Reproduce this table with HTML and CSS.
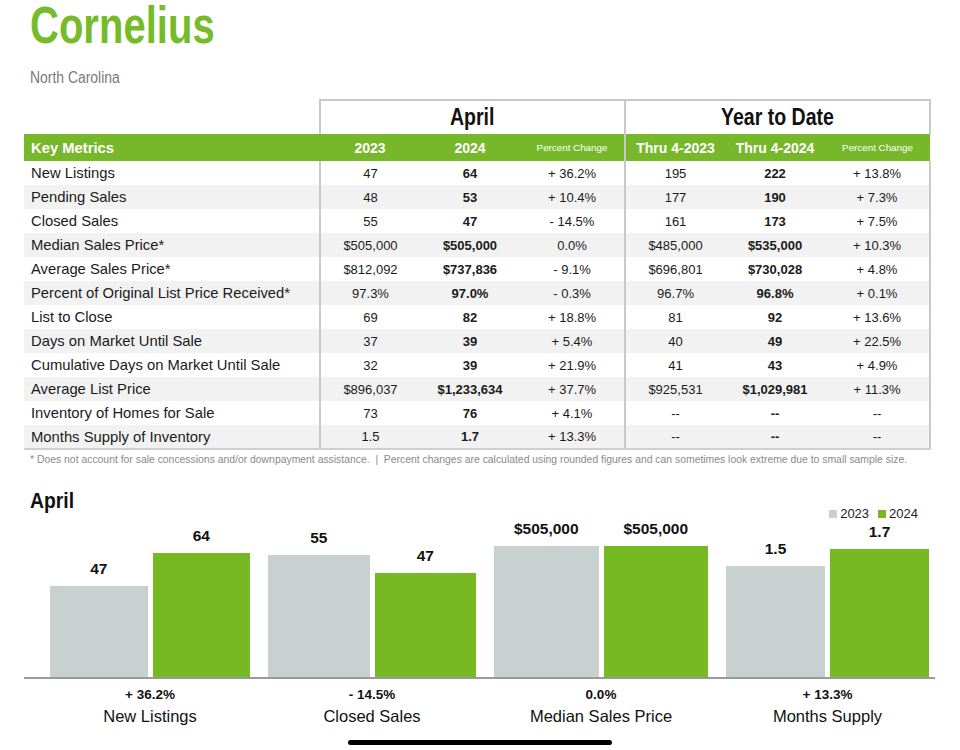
FILE: index.html
```html
<!DOCTYPE html>
<html>
<head>
<meta charset="utf-8">
<link rel="stylesheet" href="styles.css">
</head>
<body>
<div class="page">
  <h1 class="title"><span class="narrow n-title">Cornelius</span></h1>
  <div class="subtitle"><span class="narrow n-sub">North Carolina</span></div>

  <table class="metrics">
    <colgroup>
      <col class="c-label"><col class="c-num"><col class="c-num"><col class="c-pct"><col class="c-num"><col class="c-num"><col class="c-pct">
    </colgroup>
    <thead>
      <tr class="period">
        <th class="blank"></th>
        <th colspan="3" class="sect"><span class="narrow n-head">April</span></th>
        <th colspan="3" class="sect"><span class="narrow n-head">Year to Date</span></th>
      </tr>
      <tr class="green">
        <th class="lbl">Key Metrics</th>
        <th>2023</th><th>2024</th><th class="pc sep-r">Percent Change</th>
        <th>Thru 4-2023</th><th>Thru 4-2024</th><th class="pc">Percent Change</th>
      </tr>
    </thead>
    <tbody>
      <tr><td class="lbl">New Listings</td><td>47</td><td class="b">64</td><td class="sep-r">+ 36.2%</td><td>195</td><td class="b">222</td><td>+ 13.8%</td></tr>
      <tr class="alt"><td class="lbl">Pending Sales</td><td>48</td><td class="b">53</td><td class="sep-r">+ 10.4%</td><td>177</td><td class="b">190</td><td>+ 7.3%</td></tr>
      <tr><td class="lbl">Closed Sales</td><td>55</td><td class="b">47</td><td class="sep-r">- 14.5%</td><td>161</td><td class="b">173</td><td>+ 7.5%</td></tr>
      <tr class="alt"><td class="lbl">Median Sales Price*</td><td>$505,000</td><td class="b">$505,000</td><td class="sep-r">0.0%</td><td>$485,000</td><td class="b">$535,000</td><td>+ 10.3%</td></tr>
      <tr><td class="lbl">Average Sales Price*</td><td>$812,092</td><td class="b">$737,836</td><td class="sep-r">- 9.1%</td><td>$696,801</td><td class="b">$730,028</td><td>+ 4.8%</td></tr>
      <tr class="alt"><td class="lbl">Percent of Original List Price Received*</td><td>97.3%</td><td class="b">97.0%</td><td class="sep-r">- 0.3%</td><td>96.7%</td><td class="b">96.8%</td><td>+ 0.1%</td></tr>
      <tr><td class="lbl">List to Close</td><td>69</td><td class="b">82</td><td class="sep-r">+ 18.8%</td><td>81</td><td class="b">92</td><td>+ 13.6%</td></tr>
      <tr class="alt"><td class="lbl">Days on Market Until Sale</td><td>37</td><td class="b">39</td><td class="sep-r">+ 5.4%</td><td>40</td><td class="b">49</td><td>+ 22.5%</td></tr>
      <tr><td class="lbl">Cumulative Days on Market Until Sale</td><td>32</td><td class="b">39</td><td class="sep-r">+ 21.9%</td><td>41</td><td class="b">43</td><td>+ 4.9%</td></tr>
      <tr class="alt"><td class="lbl">Average List Price</td><td>$896,037</td><td class="b">$1,233,634</td><td class="sep-r">+ 37.7%</td><td>$925,531</td><td class="b">$1,029,981</td><td>+ 11.3%</td></tr>
      <tr><td class="lbl">Inventory of Homes for Sale</td><td>73</td><td class="b">76</td><td class="sep-r">+ 4.1%</td><td>--</td><td class="b">--</td><td>--</td></tr>
      <tr class="alt"><td class="lbl">Months Supply of Inventory</td><td>1.5</td><td class="b">1.7</td><td class="sep-r">+ 13.3%</td><td>--</td><td class="b">--</td><td>--</td></tr>
    </tbody>
  </table>
  <p class="note">* Does not account for sale concessions and/or downpayment assistance. &nbsp;|&nbsp; Percent changes are calculated using rounded figures and can sometimes look extreme due to small sample size.</p>

  <section class="chart">
    <div class="chart-head">
      <h2 class="chart-title"><span class="narrow n-chart">April</span></h2>
      <div class="legend">
        <span class="key"><i class="sw gray"></i>2023</span>
        <span class="key"><i class="sw green"></i>2024</span>
      </div>
    </div>
    <div class="plot">
      <div class="group">
        <div class="bar-col"><span class="val">47</span><div class="bar gray" style="height:91px"></div></div>
        <div class="bar-col"><span class="val">64</span><div class="bar green" style="height:124px"></div></div>
      </div>
      <div class="group">
        <div class="bar-col"><span class="val">55</span><div class="bar gray" style="height:122px"></div></div>
        <div class="bar-col"><span class="val">47</span><div class="bar green" style="height:104px"></div></div>
      </div>
      <div class="group">
        <div class="bar-col"><span class="val">$505,000</span><div class="bar gray" style="height:131px"></div></div>
        <div class="bar-col"><span class="val">$505,000</span><div class="bar green" style="height:131px"></div></div>
      </div>
      <div class="group">
        <div class="bar-col"><span class="val">1.5</span><div class="bar gray" style="height:111px"></div></div>
        <div class="bar-col"><span class="val">1.7</span><div class="bar green" style="height:128px"></div></div>
      </div>
    </div>
    <div class="labels">
      <div class="cap"><b>+ 36.2%</b><span>New Listings</span></div>
      <div class="cap"><b>- 14.5%</b><span>Closed Sales</span></div>
      <div class="cap"><b>0.0%</b><span>Median Sales Price</span></div>
      <div class="cap"><b>+ 13.3%</b><span>Months Supply</span></div>
    </div>
  </section>
  <div class="home-bar"></div>
</div>
</body>
</html>
```

FILE: styles.css
```css
* { box-sizing: border-box; }
html, body { margin: 0; padding: 0; background: #fff; }
body {
  font-family: "Liberation Sans", Arial, sans-serif;
  color: #111;
  width: 960px;
  height: 750px;
  overflow: hidden;
}
.page { padding: 0 0 0 24px; position: relative; height: 750px; }

.narrow { display: inline-block; white-space: nowrap; }

.title {
  margin: 0 0 0 6px;
  font-weight: bold;
  font-size: 52px;
  line-height: 50px;
  height: 48px;
  color: #76bc29;
}
.n-title { transform: scaleX(0.77); transform-origin: left center; }

.subtitle {
  margin: 20px 0 0 6px;
  font-size: 16px;
  line-height: 20px;
  color: #7a7a7a;
}
.n-sub { transform: scaleX(0.87); transform-origin: left center; }

.metrics {
  margin-top: 11px;
  border-collapse: collapse;
  table-layout: fixed;
  width: 906px;
  font-size: 13px;
}
.c-label { width: 296px; }
.c-num { width: 100px; }
.c-pct { width: 105px; }

.period th { height: 34px; padding: 0; }
.period .blank { border: none; }
.period .sect {
  border: 2px solid #c9c9c9;
  border-bottom: none;
  font-size: 23px;
  font-weight: bold;
  color: #111;
  vertical-align: middle;
  text-align: center;
}
.n-head { transform: scaleX(0.85); transform-origin: center center; }

.green th {
  background: #77b82b;
  color: #fff;
  font-weight: bold;
  font-size: 14px;
  height: 27px;
  padding: 0;
  text-align: center;
}
.green th.lbl { text-align: left; padding-left: 7px; font-size: 14.8px; }
.green th.pc { font-weight: normal; font-size: 9.8px; }
.green th.sep-r { border-right: 2px solid #c9c9c9; }

tbody td {
  height: 24px;
  padding: 0;
  text-align: center;
  color: #1a1a1a;
  white-space: nowrap;
}
tbody td.lbl {
  text-align: left;
  padding-left: 7px;
  font-size: 14.8px;
  border-right: 2px solid #c9c9c9;
}
tbody td.sep-r { border-right: 2px solid #c9c9c9; }
tbody td:last-child { border-right: 2px solid #c9c9c9; }
tbody td.b { font-weight: bold; }
tbody tr.alt td { background: #f2f2f2; }
tbody tr:last-child td { border-bottom: 2px solid #cfcfcf; }

.note {
  margin: 4px 0 0 6px;
  font-size: 10.4px;
  line-height: 12px;
  color: #8a8a8a;
  white-space: nowrap;
}

.chart { margin-top: 1px; width: 911px; }
.chart-head { display: flex; justify-content: space-between; align-items: flex-start; height: 52px; }
.chart-title {
  margin: 21px 0 0 6px;
  font-weight: bold;
  font-size: 22px;
  line-height: 26px;
  color: #111;
}
.n-chart { transform: scaleX(0.88); transform-origin: left center; }
.legend { display: flex; gap: 9px; margin: 40px 17px 0 0; font-size: 13px; line-height: 14px; color: #222; }
.key { display: flex; align-items: center; gap: 3px; }
.sw { display: inline-block; width: 8px; height: 8px; }
.sw.gray, .bar.gray { background: #c8d1d0; }
.sw.green, .bar.green { background: #77b922; }

.plot {
  display: grid;
  grid-template-columns: 200px 208px 214px 203px;
  column-gap: 18px;
  height: 160px;
  padding: 0 6px 0 26px;
  border-bottom: 2px solid #9a9a9a;
  align-items: end;
}
.group { display: grid; grid-template-columns: 1fr 1fr; column-gap: 5px; align-items: end; height: 100%; }
.bar-col { display: flex; flex-direction: column; align-items: center; justify-content: flex-end; height: 100%; }
.val { font-weight: bold; font-size: 15.5px; line-height: 18px; margin-bottom: 8px; color: #111; flex-shrink: 0; }
.bar { width: 100%; flex-shrink: 0; }

.labels {
  display: grid;
  grid-template-columns: 200px 208px 214px 203px;
  column-gap: 18px;
  padding: 0 6px 0 26px;
  margin-top: 8px;
}
.cap { display: flex; flex-direction: column; align-items: center; }
.cap b { font-size: 13.5px; line-height: 16px; color: #111; }
.cap span { font-size: 16.5px; line-height: 22px; margin-top: 2px; color: #111; }

.home-bar {
  position: absolute;
  left: 348px;
  top: 740px;
  width: 264px;
  height: 5px;
  border-radius: 3px;
  background: #000;
}
```
